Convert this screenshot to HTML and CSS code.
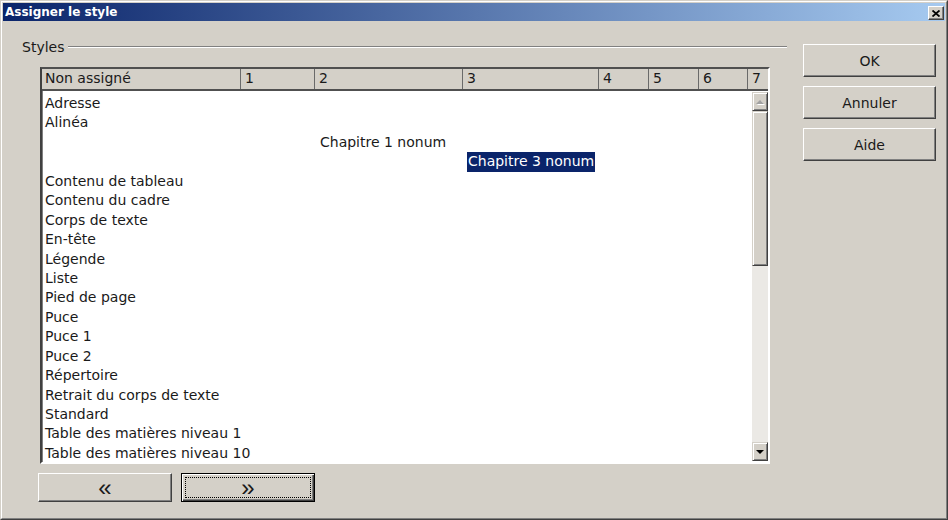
FILE: index.html
```html
<!DOCTYPE html>
<html lang="fr">
<head>
    <meta charset="UTF-8">
    <title>Assigner le style</title>
    <link rel="stylesheet" href="styles.css">
</head>
<body>
    <div class="dialog">
        <div class="frame">
            <!-- Barre de titre -->
            <div class="titlebar">
                <span class="title">Assigner le style</span>
                <button class="close">
                    <svg width="8" height="7" viewBox="0 0 8 7"><path d="M0.5 0.5 L7.5 6.5 M7.5 0.5 L0.5 6.5" stroke="#000" stroke-width="1.8" fill="none"/></svg>
                </button>
            </div>

            <div class="content">
                <div class="main">
                    <div class="group-title">
                        <span>Styles</span>
                        <span class="rule"></span>
                    </div>

                    <div class="table">
                        <div class="thead">
                            <div class="th c1">Non assigné</div>
                            <div class="th c2">1</div>
                            <div class="th c3">2</div>
                            <div class="th c4">3</div>
                            <div class="th c5">4</div>
                            <div class="th c6">5</div>
                            <div class="th c7">6</div>
                            <div class="th c8">7</div>
                        </div>
                        <div class="list">
                            <div class="rows">
                                <div class="row"><span>Adresse</span></div>
                                <div class="row"><span>Alinéa</span></div>
                                <div class="row lvl-2"><span>Chapitre 1 nonum</span></div>
                                <div class="row lvl-3"><span class="selected">Chapitre 3 nonum</span></div>
                                <div class="row"><span>Contenu de tableau</span></div>
                                <div class="row"><span>Contenu du cadre</span></div>
                                <div class="row"><span>Corps de texte</span></div>
                                <div class="row"><span>En-tête</span></div>
                                <div class="row"><span>Légende</span></div>
                                <div class="row"><span>Liste</span></div>
                                <div class="row"><span>Pied de page</span></div>
                                <div class="row"><span>Puce</span></div>
                                <div class="row"><span>Puce 1</span></div>
                                <div class="row"><span>Puce 2</span></div>
                                <div class="row"><span>Répertoire</span></div>
                                <div class="row"><span>Retrait du corps de texte</span></div>
                                <div class="row"><span>Standard</span></div>
                                <div class="row"><span>Table des matières niveau 1</span></div>
                                <div class="row"><span>Table des matières niveau 10</span></div>
                            </div>
                            <!-- Barre de défilement -->
                            <div class="scrollbar">
                                <div class="sb-btn"><span class="arrow-up"></span></div>
                                <div class="sb-thumb"></div>
                                <div class="sb-track"></div>
                                <div class="sb-btn"><span class="arrow-down"></span></div>
                            </div>
                        </div>
                    </div>

                    <div class="nav">
                        <button class="btn nav-btn">«</button>
                        <button class="btn nav-btn default"><span class="focus">»</span></button>
                    </div>
                </div>

                <div class="side">
                    <button class="btn side-btn">OK</button>
                    <button class="btn side-btn">Annuler</button>
                    <button class="btn side-btn">Aide</button>
                </div>
            </div>
        </div>
    </div>
</body>
</html>
```

FILE: styles.css
```css
body {
    margin: 0;
    background-color: #d4d0c8;
    font-family: "DejaVu Sans", sans-serif;
    font-size: 14px;
    color: #1a1a1a;
}
.dialog {
    width: 948px;
    height: 520px;
    box-sizing: border-box;
    border: 1px solid;
    border-color: #d4d0c8 #404040 #404040 #d4d0c8;
}
.frame {
    height: 100%;
    box-sizing: border-box;
    border: 1px solid;
    border-color: #fff #808080 #808080 #fff;
    padding: 1px;
}
/* Barre de titre */
.titlebar {
    height: 18px;
    display: flex;
    align-items: center;
    justify-content: space-between;
    background: linear-gradient(to right, #0a246a, #a6caf0);
    padding: 0 1px 0 2px;
}
.title {
    color: white;
    font-weight: bold;
    font-size: 12px;
}
.close {
    width: 16px;
    height: 14px;
    margin-top: 2px;
    padding: 0;
    display: flex;
    align-items: center;
    justify-content: center;
    background-color: #d4d0c8;
    border: 1px solid;
    border-color: #fff #404040 #404040 #fff;
    box-shadow: inset -1px -1px #808080;
}
.content {
    display: flex;
}
.main {
    margin-left: 19px;
    width: 765px;
}
.group-title {
    display: flex;
    align-items: center;
    height: 16px;
    margin-top: 18px;
}
.rule {
    flex: 1;
    margin-left: 4px;
    border-top: 1px solid #808080;
    border-bottom: 1px solid #fff;
}
/* Tableau des styles */
.table {
    margin: 12px 0 0 18px;
    width: 730px;
    box-sizing: border-box;
    border-left: 2px solid #404040;
    border-top: 2px solid #505050;
    border-right: 2px solid #fff;
    border-bottom: 2px solid #fff;
}
.thead {
    display: flex;
    height: 20px;
    border-bottom: 2px solid #505050;
    background-color: #d4d0c8;
}
.th {
    box-sizing: border-box;
    padding-left: 4px;
    line-height: 19px;
    border-left: 1px solid #6a6a6a;
    white-space: nowrap;
}
.c1 { width: 198px; border-left: none; padding-left: 3px; }
.c2 { width: 74px; }
.c3 { width: 148px; }
.c4 { width: 136px; }
.c5 { width: 50px; }
.c6 { width: 50px; }
.c7 { width: 49px; }
.c8 { flex: 1; }
.list {
    display: flex;
    height: 371px;
    background-color: white;
    box-shadow: inset 1px 0 #808080;
}
.rows {
    flex: 1;
    padding: 3px 0 0 3px;
    overflow: hidden;
}
.row {
    height: 19.45px;
    line-height: 19.45px;
    white-space: nowrap;
}
.row span {
    display: inline-block;
}
.lvl-2 { padding-left: 274px; }
.lvl-3 { padding-left: 422px; }
.lvl-2 span, .lvl-3 span {
    padding: 0 1px;
}
.selected {
    background-color: #0a246a;
    color: white;
}
/* Barre de défilement */
.scrollbar {
    width: 16px;
    margin: 1px 0;
    display: flex;
    flex-direction: column;
}
.sb-btn, .sb-thumb {
    box-sizing: border-box;
    background-color: #d4d0c8;
    border: 1px solid;
    border-color: #d4d0c8 #404040 #404040 #d4d0c8;
    box-shadow: inset 1px 1px #fff, inset -1px -1px #808080;
}
.sb-btn {
    height: 19px;
    display: flex;
    align-items: center;
    justify-content: center;
}
.sb-thumb {
    height: 155px;
}
.sb-track {
    flex: 1;
    background-color: #ebe9e5;
}
.arrow-up {
    width: 0;
    height: 0;
    border-left: 4px solid transparent;
    border-right: 4px solid transparent;
    border-bottom: 4px solid #a0a0a0;
    filter: drop-shadow(1px 1px 0 #fff);
}
.arrow-down {
    width: 0;
    height: 0;
    border-left: 4px solid transparent;
    border-right: 4px solid transparent;
    border-top: 4px solid #000;
}
/* Boutons */
.btn {
    box-sizing: border-box;
    font-family: "DejaVu Sans", sans-serif;
    font-size: 14px;
    color: #1a1a1a;
    background-color: #d4d0c8;
    border: 1px solid;
    border-color: #fff #404040 #404040 #fff;
    box-shadow: inset -1px -1px #808080;
    padding: 0;
}
.side {
    margin-left: 16px;
    padding-top: 23px;
    display: flex;
    flex-direction: column;
    gap: 9px;
}
.side-btn {
    width: 133px;
    height: 33px;
}
.nav {
    display: flex;
    gap: 9px;
    margin: 9px 0 0 16px;
}
.nav-btn {
    width: 134px;
    height: 29px;
    font-family: "Liberation Sans", sans-serif;
    font-size: 24px;
    line-height: 1;
}
.nav-btn.default {
    border: 1px solid #000;
    box-shadow: inset 1px 1px #fff, inset -1px -1px #404040, inset -2px -2px #808080;
    padding: 3px;
}
.focus {
    display: block;
    height: 100%;
    box-sizing: border-box;
    border: 1px dotted #000;
    line-height: 19px;
}
```
